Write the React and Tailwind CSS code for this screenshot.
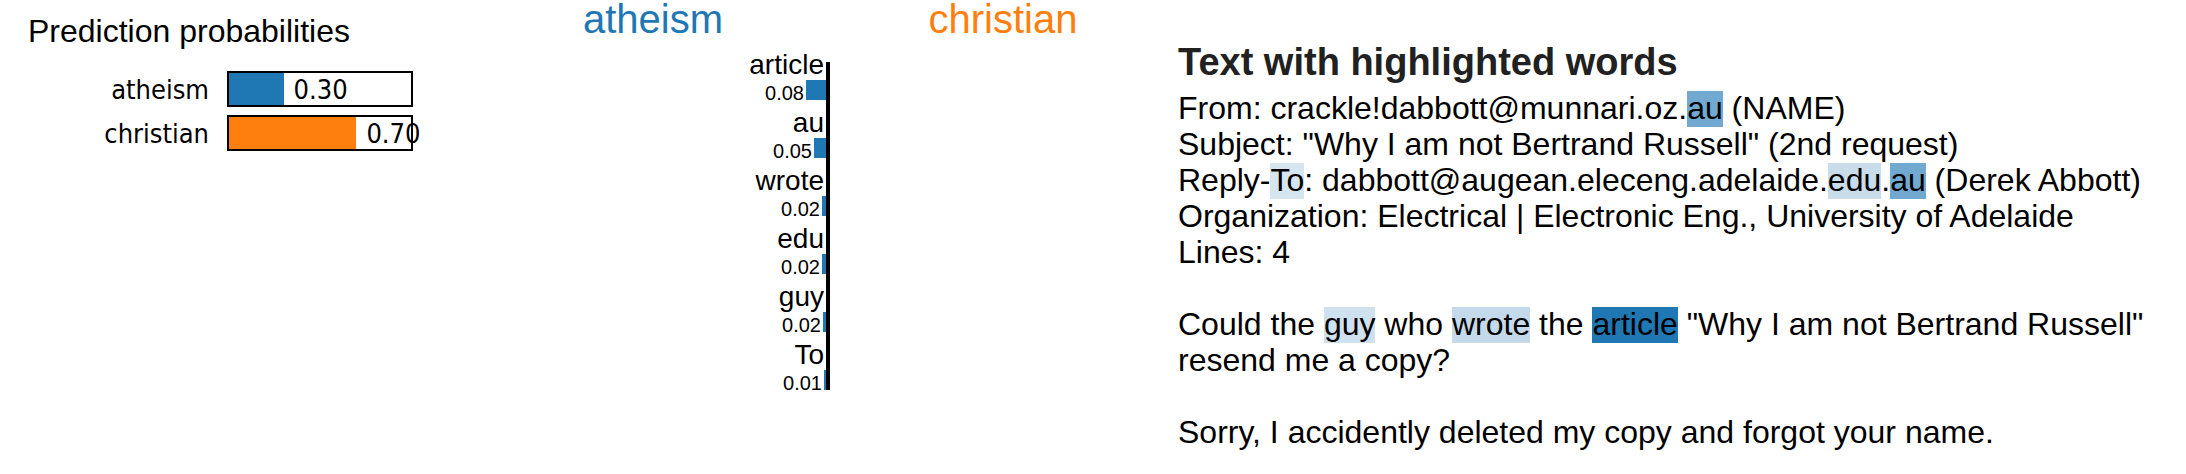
const probabilities = [
  { label: 'atheism', value: 0.3, fill: 'bg-[#1f77b4]' },
  { label: 'christian', value: 0.7, fill: 'bg-[#ff7f0e]' },
];

const weights = [
  { word: 'article', value: '0.08', bar: 'w-5' },
  { word: 'au', value: '0.05', bar: 'w-3' },
  { word: 'wrote', value: '0.02', bar: 'w-1' },
  { word: 'edu', value: '0.02', bar: 'w-1' },
  { word: 'guy', value: '0.02', bar: 'w-[3px]' },
  { word: 'To', value: '0.01', bar: 'w-[2px]' },
];

function PredictionProbabilities() {
  return (
    <section className="pt-[13px] pl-7">
      <h2 className="text-[32px] leading-9">Prediction probabilities</h2>
      <ul className="mt-[22px] flex flex-col gap-2 font-['DejaVu_Sans_Condensed','Noto_Sans',sans-serif] text-[27px]">
        {probabilities.map(({ label, value, fill }) => (
          <li key={label} className="flex h-9 gap-[18px]">
            <span className="w-[181px] text-right leading-[38px]">{label}</span>
            <div className="flex w-[186px] border-2 border-black leading-[34px]">
              <div className={`shrink-0 ${fill}`} style={{ width: `${value * 100}%` }} />
              <span className="ml-[10px] shrink-0">{value.toFixed(2)}</span>
            </div>
          </li>
        ))}
      </ul>
    </section>
  );
}

function WordWeights() {
  return (
    <section>
      <div className="grid grid-cols-2 text-center text-[40px] leading-[38px]">
        <h2 className="text-[#1f77b4]">atheism</h2>
        <h2 className="text-[#ff7f0e]">christian</h2>
      </div>
      <div className="mt-1 flex">
        <ul className="flex-1">
          {weights.map(({ word, value, bar }) => (
            <li key={word} className="pt-2">
              <div className="pr-[2px] text-right text-[28px] leading-[30px]">{word}</div>
              <div className="flex h-5 justify-end gap-[2px]">
                <span className="text-[20px] leading-[26px]">{value}</span>
                <div className={`bg-[#1f77b4] ${bar}`} />
              </div>
            </li>
          ))}
        </ul>
        <div className="mt-5 w-1 bg-black" />
        <div className="flex-1" />
      </div>
    </section>
  );
}

function Mark({ tone, children }) {
  return <mark className={`-mb-px inline-block pb-[2px] leading-[34px] text-black ${tone}`}>{children}</mark>;
}

function HighlightedText() {
  return (
    <section className="pt-10 pr-7">
      <h2 className="text-[38px] leading-[44px] font-bold text-[#212121]">Text with highlighted words</h2>
      <div className="mt-[6px] flex flex-col gap-9 text-[32px] leading-9">
        <p>
          From: crackle!dabbott@munnari.oz.<Mark tone="bg-[#72a9d0]">au</Mark> (NAME)
          <br />
          Subject: "Why I am not Bertrand Russell" (2nd request)
          <br />
          Reply-<Mark tone="bg-[#d6e6f1]">To</Mark>: dabbott@augean.eleceng.adelaide.
          <Mark tone="bg-[#c8dcea]">edu</Mark>.<Mark tone="bg-[#72a9d0]">au</Mark> (Derek Abbott)
          <br />
          Organization: Electrical | Electronic Eng., University of Adelaide
          <br />
          Lines: 4
        </p>
        <p>
          Could the <Mark tone="bg-[#cfe1ef]">guy</Mark> who <Mark tone="bg-[#c4daea]">wrote</Mark> the{' '}
          <Mark tone="bg-[#1f77b4]">article</Mark> "Why I am not Bertrand Russell"
          <br />
          resend me a copy?
        </p>
        <p>Sorry, I accidently deleted my copy and forgot your name.</p>
      </div>
    </section>
  );
}

export default function App() {
  return (
    <main className="grid min-h-screen grid-cols-[478fr_700fr_1008fr] bg-white font-['Liberation_Sans',Arial,sans-serif] text-black">
      <PredictionProbabilities />
      <WordWeights />
      <HighlightedText />
    </main>
  );
}
